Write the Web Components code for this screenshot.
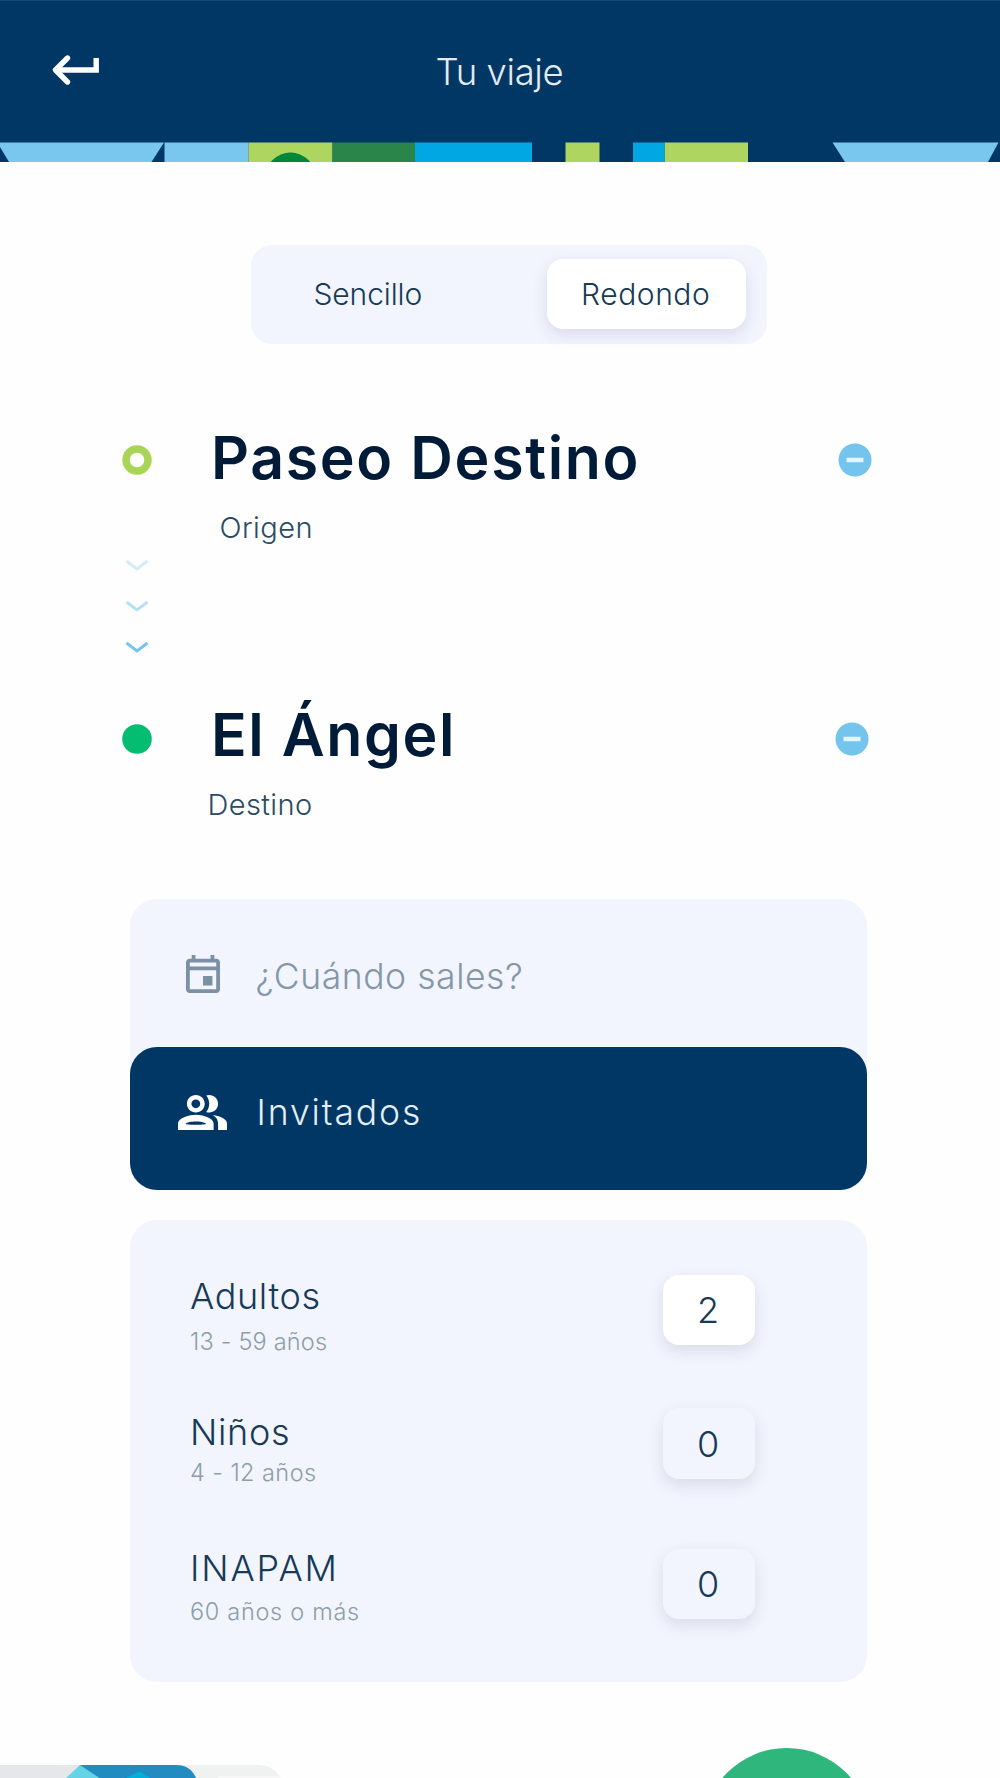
<!DOCTYPE html>
<html lang="es">
<head>
<meta charset="utf-8">
<title>Tu viaje</title>
<style>
    body{
        margin:0;
        width:1000px;
        height:1778px;
        overflow:hidden;
        background:#fefefe;
        font-family:Inter, "Noto Sans", sans-serif;
        font-weight:360;
        color:#173a56;
    }
</style>
</head>
<body>
<trip-page></trip-page>
<script>
//Etiqueta de texto ajustada a un ancho fijo
class FitLabel extends HTMLElement {
    constructor(){
        super();
        this.attachShadow({ mode : 'open' });
        this.shadowRoot.innerHTML = `
            <style>
                :host{
                    display:block;
                    line-height:1;
                    white-space:nowrap;
                }
            </style>
            <slot></slot>`;
    }

    connectedCallback(){
        const text = this.textContent;
        const style = getComputedStyle(this);
        const ctx = document.createElement('canvas').getContext('2d');
        ctx.font = `${style.fontWeight} ${style.fontSize} ${style.fontFamily}`;
        const m = ctx.measureText(text);
        const ink = m.actualBoundingBoxLeft + m.actualBoundingBoxRight;
        if(text.length > 1){ this.style.letterSpacing = `${(Number(this.getAttribute('width')) - ink) / (text.length - 1)}px` }
        this.style.textIndent = `${m.actualBoundingBoxLeft}px`;
    }
}

class TripHeader extends HTMLElement {
    constructor(){
        super();
        this.attachShadow({ mode : 'open' });
        this.shadowRoot.innerHTML = this.componentCSS() + this.componentHTML();
    }

    componentCSS(){
        return `
            <style>
                :host{
                    display:block;
                    height:162px;
                    background:#003764;
                    color:#e3eaf1;
                    font-size:36.5px;
                }
                .bar{
                    display:flex;
                    align-items:flex-start;
                    box-sizing:border-box;
                    height:142px;
                    padding:51px 0 0 50px;
                    border-top:1px solid #164973;
                }
                .back{ width:54px; height:36px; margin-right:332.5px }
                .title{ padding-top:2px }
                svg{ display:block }
            </style>`;
    }

    componentHTML(){
        return `
            <div class="bar">
                <svg class="back" viewBox="50 52 54 36" fill="none" stroke="#fff" stroke-width="5.4">
                    <path d="M67.500 58 55.500 70l12 12" stroke-linecap="round" stroke-linejoin="round"/>
                    <path d="M56 70H96.200V58"/>
                </svg>
                <div class="title"><slot></slot></div>
            </div>
            <svg width="1000" height="20" viewBox="0 142 1000 20">
                <path fill="#79c6ef" d="M0 142.600H164L151.500 162H9L0 147zM164.500 142.600h84V162h-84zM832.500 142.600H998.500L988 162H845z"/>
                <path fill="#add560" d="M248.500 142.600h84V162h-84zM565.500 142.600h34V162h-34zM664.500 142.600H748V162h-83.500z"/>
                <circle cx="290.500" cy="177.500" r="25" fill="#00873a"/>
                <path fill="#2a854a" d="M332.500 142.600H415V162h-82.500z"/>
                <path fill="#00a7e3" d="M415 142.600h117V162H415zM633 142.600h31.500V162H633z"/>
            </svg>`;
    }
}

class TripType extends HTMLElement {
    constructor(){
        super();
        this.attachShadow({ mode : 'open' });
        this.shadowRoot.innerHTML = `
            <style>
                :host{
                    display:flex;
                    box-sizing:border-box;
                    width:516px;
                    height:99px;
                    margin:82.5px 0 0 251px;
                    padding:14px 21px 0 63.5px;
                    justify-content:space-between;
                    border-radius:21px;
                    background:#f2f5fe;
                    font-size:30px;
                }
                .option{ padding-top:20.5px }
                .active{
                    box-sizing:border-box;
                    width:199px;
                    height:70px;
                    padding:20.5px 0 0 36px;
                    border-radius:16px;
                    background:#fff;
                    box-shadow:0 6px 16px rgba(40,40,80,.12);
                }
            </style>
            <div class="option"><fit-label width="107">Sencillo</fit-label></div>
            <div class="active"><fit-label width="126">Redondo</fit-label></div>`;
    }
}

class RouteStop extends HTMLElement {
    get marker(){
        return this.hasAttribute('origin')
            ? `<circle cx="15" cy="15" r="11" fill="none" stroke="#a9d556" stroke-width="7.4"/>`
            : `<circle cx="15" cy="15" r="14.8" fill="#04bd70"/>`;
    }

    connectedCallback(){
        this.attachShadow({ mode : 'open' });
        this.shadowRoot.innerHTML = `
            <style>
                :host{
                    display:flex;
                    align-items:flex-start;
                    padding-left:122px;
                    height:139px;
                }
                .marker{ margin-top:26px }
                .texts{ flex:1; margin-left:63px }
                .remove{ margin-top:23.5px }
            </style>
            <svg class="marker" width="30" height="30">${this.marker}</svg>
            <div class="texts"><slot></slot></div>
            <svg class="remove" width="34" height="34">
                <circle cx="17" cy="17" r="16.500" fill="#74c4ed"/>
                <path d="M8.500 17h17" stroke="#e4f5fd" stroke-width="4.500"/>
            </svg>`;
    }
}

class RouteArrows extends HTMLElement {
    constructor(){
        super();
        this.attachShadow({ mode : 'open' });
        this.shadowRoot.innerHTML = `
            <style>
                :host{ display:flex; flex-direction:column; gap:27px; padding-left:124px; height:133px }
                svg{ display:block; fill:none; stroke:#74c4ed; stroke-width:2.9 }
            </style>
            ${[.3, .5, 1].map(o => `<svg width="26" height="14" opacity="${o}"><path d="M2.500 3 13 11 23.500 3"/></svg>`).join('')}`;
    }
}

class TripField extends HTMLElement {
    get icon(){
        return this.hasAttribute('guests')
            ? `<svg width="49" height="35" viewBox="1 4 22 16" preserveAspectRatio="none"><path d="M16.670 13.130C18.040 14.060 19 15.320 19 17v3h4v-3c0-2.180-3.570-3.470-6.330-3.870zM15 12c2.210 0 4-1.790 4-4s-1.790-4-4-4c-.47 0-.91.1-1.330.24C14.500 5.270 15 6.580 15 8s-.5 2.730-1.330 3.760c.42.14.86.24 1.330.24zM9 12c2.210 0 4-1.790 4-4s-1.790-4-4-4-4 1.790-4 4 1.790 4 4 4zm0-6c1.100 0 2 .9 2 2s-.9 2-2 2-2-.9-2-2 .9-2 2-2zM9 13c-2.670 0-8 1.340-8 4v3h16v-3c0-2.660-5.330-4-8-4zm4.600 4.200C12.500 17.700 5.500 17.700 4.400 17.200 5.600 15.800 12.400 15.800 13.600 17.200z"/></svg>`
            : `<svg width="34" height="38" viewBox="3 1 18 20" preserveAspectRatio="none"><path d="M19 3h-1V1h-2v2H8V1H6v2H5c-1.110 0-1.990.9-1.990 2L3 19c0 1.100.89 2 2 2h14c1.100 0 2-.9 2-2V5c0-1.100-.9-2-2-2zm0 16H5V9h14v10zM5 7V5h14v2H5zm7 5h5v5h-5z"/></svg>`;
    }

    connectedCallback(){
        this.attachShadow({ mode : 'open' });
        this.shadowRoot.innerHTML = `
            <style>
                :host{
                    display:flex;
                    align-items:flex-start;
                    box-sizing:border-box;
                    width:737px;
                    height:176px;
                    margin:0 0 -28px 129.5px;
                    padding:56px 0 0 56.5px;
                    border-radius:27px 27px 0 0;
                    background:#f2f5fe;
                    color:#8497a8;
                    font-size:35.5px;
                }
                :host([guests]){
                    position:relative;
                    height:143px;
                    margin-bottom:0;
                    padding:47.5px 0 0 48px;
                    border-radius:27px;
                    background:#003764;
                    color:#e3eef6;
                }
                svg{ display:block; fill:#7b90a2 }
                :host([guests]) svg{ fill:#fff }
                .label{ padding:3.5px 0 0 36.5px }
                :host([guests]) .label{ padding:0 0 0 33px }
            </style>
            ${this.icon}
            <div class="label"><slot></slot></div>`;
    }
}

class GuestRow extends HTMLElement {
    connectedCallback(){
        this.attachShadow({ mode : 'open' });
        this.shadowRoot.innerHTML = `
            <style>
                :host{ display:flex; justify-content:space-between; align-items:flex-start; height:70.5px }
                .texts{ display:flex; flex-direction:column }
                ::slotted([slot="age"]){ color:#8c9dac; font-size:23.5px }
                ::slotted([slot="name"]){ font-size:36px }
                .count{
                    box-sizing:border-box;
                    width:92.5px;
                    height:70.5px;
                    border-radius:16px;
                    padding:17.5px 0 0 36.5px;
                    background:${this.getAttribute('count') > 0 ? '#fff' : '#f3f5fe'};
                    box-shadow:0 6px 16px rgba(40,40,70,.12);
                    font-size:36px;
                }
            </style>
            <div class="texts"><slot name="name"></slot><slot name="age"></slot></div>
            <div class="count"><fit-label>${this.getAttribute('count')}</fit-label></div>`;
    }
}

class GuestPanel extends HTMLElement {
    constructor(){
        super();
        this.attachShadow({ mode : 'open' });
        this.shadowRoot.innerHTML = `
            <style>
                :host{
                    display:block;
                    box-sizing:border-box;
                    width:737px;
                    height:462px;
                    margin:29.5px 0 0 129.5px;
                    padding:55px 111.5px 0 61.5px;
                    border-radius:27px;
                    background:#f2f5fe;
                }
            </style>
            <slot></slot>`;
    }
}

//Franja inferior: tarjeta recortada y botón flotante
class TripFooter extends HTMLElement {
    constructor(){
        super();
        this.attachShadow({ mode : 'open' });
        this.shadowRoot.innerHTML = `
            <style>
                :host{ display:block; margin-top:64px }
                svg{ display:block }
            </style>
            <svg width="1000" height="33" viewBox="0 1745 1000 33">
                <path fill="#f0f1f1" d="M150 1764H258Q274 1764 281 1778H150z"/>
                <path fill="#fafafa" d="M218 1775.500h62v2h-62z"/>
                <path fill="#e5e7ea" d="M0 1764H90V1778H0z"/>
                <path fill="#65d2e6" d="M80 1764 65 1778H104L96 1764z"/>
                <path fill="#228bc1" d="M80 1764H176Q191 1764 196.500 1778H101z"/>
                <path fill="#00b0da" d="M139.500 1770.500 124 1778H152z"/>
                <circle cx="786.700" cy="1831" r="84" fill="#2eb67d"/>
            </svg>`;
    }
}

class TripPage extends HTMLElement {
    constructor(){
        super();
        this.attachShadow({ mode : 'open' });
        this.shadowRoot.innerHTML = this.componentCSS() + this.componentHTML();
    }

    componentCSS(){
        return `
            <style>
                :host{ display:block }
                .name{ font-size:59px; font-weight:640; color:#001b38 }
                .kind{ font-size:29px; color:#2b4b64 }
                .route{ display:flex; flex-direction:column; margin-top:75.5px; height:480px }
                .origin{ padding-right:128.5px }
                .origin .name{ margin-top:9px }
                .origin .kind{ margin:25.5px 0 0 5.5px }
                .destination{ margin-top:7px; padding-right:131px }
                .destination .name{ margin-top:7px }
                .destination .kind{ margin:25.5px 0 0 -5.5px }
                .children{ margin-top:63px }
                .seniors{ margin-top:70px }
            </style>`;
    }

    componentHTML(){
        return `
            <trip-header><fit-label width="126">Tu viaje</fit-label></trip-header>
            <trip-type></trip-type>
            <section class="route">
                <route-stop class="origin" origin>
                    <fit-label class="name" width="421.5">Paseo Destino</fit-label>
                    <fit-label class="kind" width="90">Origen</fit-label>
                </route-stop>
                <route-arrows></route-arrows>
                <route-stop class="destination">
                    <fit-label class="name" width="236">El Ángel</fit-label>
                    <fit-label class="kind" width="101.5">Destino</fit-label>
                </route-stop>
            </section>
            <trip-field><fit-label width="264.5">¿Cuándo sales?</fit-label></trip-field>
            <trip-field guests><fit-label width="159.5">Invitados</fit-label></trip-field>
            <guest-panel>
                <guest-row count="2">
                    <fit-label slot="name" width="127.5" style="margin-top:3px">Adultos</fit-label>
                    <fit-label slot="age" width="135" style="margin-top:16px">13 - 59 años</fit-label>
                </guest-row>
                <guest-row class="children" count="0">
                    <fit-label slot="name" width="95" style="margin:5.5px 0 0 2px">Niños</fit-label>
                    <fit-label slot="age" width="124" style="margin-top:11px">4 - 12 años</fit-label>
                </guest-row>
                <guest-row class="seniors" count="0">
                    <fit-label slot="name" width="140.5" style="margin:1px 0 0 2px">INAPAM</fit-label>
                    <fit-label slot="age" width="167" style="margin-top:14px">60 años o más</fit-label>
                </guest-row>
            </guest-panel>
            <trip-footer></trip-footer>`;
    }
}

window.customElements.define('fit-label', FitLabel)
window.customElements.define('trip-header', TripHeader)
window.customElements.define('trip-type', TripType)
window.customElements.define('route-stop', RouteStop)
window.customElements.define('route-arrows', RouteArrows)
window.customElements.define('trip-field', TripField)
window.customElements.define('guest-row', GuestRow)
window.customElements.define('guest-panel', GuestPanel)
window.customElements.define('trip-footer', TripFooter)
window.customElements.define('trip-page', TripPage)
</script>
</body>
</html>
